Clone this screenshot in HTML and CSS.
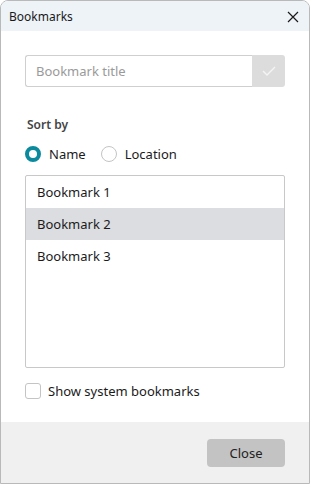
FILE: index.html
```html
<!DOCTYPE html>
<html lang="en">
<head>
    <meta charset="UTF-8">
    <meta name="viewport" content="width=device-width, initial-scale=1.0">
    <title>Bookmarks</title>
    <link rel="stylesheet" href="styles.css">
</head>
<body>
    <div class="dialog">
        <div class="titlebar">
            <span class="title">Bookmarks</span>
            <svg class="close-x" width="12" height="12" viewBox="0 0 12 12">
                <path d="M1 1 L11 11 M11 1 L1 11" stroke="#1a1a1a" stroke-width="1.2" fill="none"/>
            </svg>
        </div>

        <div class="content">
            <div class="title-row">
                <input class="title-input" type="text" placeholder="Bookmark title">
                <button class="ok-btn">
                    <svg width="14" height="10" viewBox="0 0 14 10">
                        <path d="M1 5 L5 9 L13 1" stroke="#f4f4f4" stroke-width="1.4" fill="none"/>
                    </svg>
                </button>
            </div>

            <div class="sort-label">Sort by</div>
            <div class="radio-row">
                <label class="radio"><span class="dot checked"></span>Name</label>
                <label class="radio"><span class="dot"></span>Location</label>
            </div>

            <div class="list">
                <div class="list-item">Bookmark 1</div>
                <div class="list-item selected">Bookmark 2</div>
                <div class="list-item">Bookmark 3</div>
            </div>

            <label class="check-row"><span class="box"></span>Show system bookmarks</label>
        </div>

        <div class="footer">
            <button class="close-btn">Close</button>
        </div>
    </div>
</body>
</html>
```

FILE: styles.css
```css
* {
    box-sizing: border-box;
}

body {
    margin: 0;
    width: 310px;
    height: 484px;
    font-family: "Noto Sans", "Open Sans", sans-serif;
    color: #1b1b1b;
    background: #fff;
}

.dialog {
    width: 310px;
    height: 484px;
    border: 1px solid #b9b9b9;
    border-radius: 8px 8px 0 0;
    display: flex;
    flex-direction: column;
    overflow: hidden;
    background: #fff;
}

.titlebar {
    height: 30px;
    background: #eef3f8;
    display: flex;
    align-items: center;
    justify-content: space-between;
    padding: 0 10px 0 8px;
    flex-shrink: 0;
}

.title {
    font-size: 12px;
    color: #1a1a1a;
}

.close-x {
    margin-top: 1px;
}

.content {
    flex: 1;
    padding: 24px 24px 0 24px;
}

.title-row {
    display: flex;
    height: 32px;
}

.title-input {
    flex: 1;
    min-width: 0;
    height: 32px;
    border: 1px solid #cfcfcf;
    border-right: none;
    border-radius: 3px 0 0 3px;
    padding: 0 10px;
    font-family: inherit;
    font-size: 13px;
    outline: none;
}

.title-input::placeholder {
    color: #9a9a9a;
}

.ok-btn {
    width: 33px;
    height: 32px;
    border: none;
    background: #dcdcdc;
    border-radius: 0 3px 3px 0;
    display: flex;
    align-items: center;
    justify-content: center;
    padding: 0;
}

.sort-label {
    margin-top: 29px;
    font-size: 12px;
    font-weight: 600;
    color: #444;
    padding-left: 2px;
    height: 18px;
}

.radio-row {
    display: flex;
    gap: 15px;
    margin-top: 10px;
    height: 20px;
    align-items: center;
}

.radio {
    display: flex;
    align-items: center;
    font-size: 13px;
    gap: 8px;
}

.dot {
    width: 16px;
    height: 16px;
    border-radius: 50%;
    border: 1px solid #c4c4c4;
    background: #fff;
}

.dot.checked {
    border: 4px solid #0b8a9e;
}

.list {
    margin-top: 11px;
    height: 193px;
    border: 1px solid #c8c8c8;
    border-radius: 2px;
}

.list-item {
    height: 32px;
    line-height: 32px;
    padding-left: 11px;
    font-size: 13px;
}

.list-item.selected {
    background: #dcdde0;
}

.check-row {
    display: flex;
    align-items: center;
    gap: 7px;
    margin-top: 14px;
    font-size: 13px;
}

.box {
    width: 16px;
    height: 16px;
    border: 1px solid #c4c4c4;
    border-radius: 3px;
}

.footer {
    height: 61px;
    background: #f0f0f0;
    display: flex;
    justify-content: flex-end;
    padding: 17px 24px 0 0;
    flex-shrink: 0;
}

.close-btn {
    width: 78px;
    height: 28px;
    border: none;
    border-radius: 4px;
    background: #c3c3c3;
    font-family: inherit;
    font-size: 13px;
    color: #222;
}
```
